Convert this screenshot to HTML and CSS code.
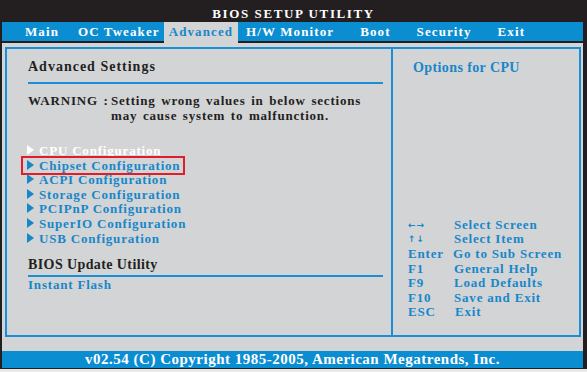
FILE: index.html
```html
<!DOCTYPE html>
<html lang="en">
<head>
    <meta charset="UTF-8">
    <title>BIOS SETUP UTILITY</title>
    <link rel="stylesheet" href="styles.css">
</head>
<body>
<div class="bios">
    <div class="title">BIOS SETUP UTILITY</div>
    <div class="tabs">
        <span class="tab tab-main">Main</span>
        <span class="tab tab-oc">OC Tweaker</span>
        <span class="tab active">Advanced</span>
        <span class="tab tab-hw">H/W Monitor</span>
        <span class="tab">Boot</span>
        <span class="tab">Security</span>
        <span class="tab">Exit</span>
    </div>
    <div class="body">
        <div class="frame">
            <div class="panel-left">
                <div class="section-title first">Advanced Settings</div>
                <div class="warning">
                    <span>WARNING :</span>
                    <span>Setting wrong values in below sections<br>may cause system to malfunction.</span>
                </div>
                <ul class="menu">
                    <li class="current">CPU Configuration</li>
                    <li class="marked">Chipset Configuration</li>
                    <li>ACPI Configuration</li>
                    <li>Storage Configuration</li>
                    <li>PCIPnP Configuration</li>
                    <li>SuperIO Configuration</li>
                    <li>USB Configuration</li>
                </ul>
                <div class="section-title second">BIOS Update Utility</div>
                <div class="flash">Instant Flash</div>
            </div>
            <div class="panel-right">
                <div class="help-title">Options for CPU</div>
                <div class="keys">
                    <span class="arrow">&larr;&rarr;</span><span>Select Screen</span>
                    <span class="arrow">&uarr;&darr;</span><span>Select Item</span>
                    <span>Enter</span><span class="shift">Go to Sub Screen</span>
                    <span>F1</span><span>General Help</span>
                    <span>F9</span><span>Load Defaults</span>
                    <span>F10</span><span>Save and Exit</span>
                    <span>ESC</span><span class="push">Exit</span>
                </div>
            </div>
        </div>
    </div>
    <div class="footer">v02.54 (C) Copyright 1985-2005, American Megatrends, Inc.</div>
</div>
</body>
</html>
```
FILE: styles.css
```css
* {
    margin: 0;
    padding: 0;
    box-sizing: border-box;
}

ul {
    list-style: none;
}

html {
    background: #e9e9e9;
}

body {
    font-family: "Liberation Serif", "Times New Roman", serif;
    font-weight: bold;
    font-size: 13px;
    letter-spacing: 0.8px;
    color: #231f20;
}

.bios {
    height: 369px;
    background: #231f20;
}

.title {
    height: 22px;
    padding-top: 6px;
    line-height: 16px;
    text-align: center;
    color: #fff;
    letter-spacing: 1.6px;
}

.tabs {
    display: flex;
    height: 21px;
    margin: 0 4px 0 2px;
    padding-left: 14px;
    background: #0b8dd2;
    border-bottom: 2px solid #231f20;
    letter-spacing: 1.1px;
}

.tab {
    padding: 0 13px;
    line-height: 19px;
    color: #fff;
}

.tab-main {
    padding: 0 9px;
}

.tab-oc {
    padding: 0 4px 0 10px;
}

.tab-hw {
    padding-left: 8px;
}

.tab.active {
    height: 21px;
    padding: 0 5px;
    background: #d3d4d6;
    color: #1787c9;
}

.body {
    margin: 0 4px 0 2px;
    padding: 4px 2px 14px 3px;
    background: #d3d4d6;
}

.frame {
    display: flex;
    height: 290px;
    border: 2px solid #1a8fd5;
}

.panel-left {
    width: 386px;
    padding: 10px 8px 0 21px;
    border-right: 2px solid #1a8fd5;
}

.section-title {
    font-size: 14px;
    line-height: 16px;
    border-bottom: 2px solid #1a8fd5;
}

.section-title.first {
    padding-bottom: 7px;
    letter-spacing: 1px;
}

.section-title.second {
    margin-top: 11px;
    padding-bottom: 2px;
    letter-spacing: 0.4px;
}

.warning {
    display: grid;
    grid-template-columns: 83px auto;
    margin-top: 10px;
    line-height: 14.5px;
    word-spacing: 1.6px;
}

.menu {
    margin: 21px 0 0 -1px;
    line-height: 14.6px;
    color: #1787c9;
}

.menu li {
    width: fit-content;
    position: relative;
}

.menu li::before {
    content: "";
    display: inline-block;
    width: 0;
    height: 0;
    margin-right: 5px;
    border-left: 7px solid currentColor;
    border-top: 5px solid transparent;
    border-bottom: 5px solid transparent;
}

.menu li.current {
    color: #fff;
}

.menu li.marked::after {
    content: "";
    position: absolute;
    top: -3px;
    bottom: -2px;
    left: -6px;
    right: -5px;
    border: 2px solid #e21d2b;
}

.flash {
    margin-top: 1px;
    line-height: 14.6px;
    color: #1787c9;
}

.panel-right {
    flex: 1;
    display: flex;
    flex-direction: column;
    padding: 11px 0 15px 15px;
    color: #1787c9;
}

.help-title {
    margin-left: 5px;
    font-size: 14px;
    line-height: 16px;
    letter-spacing: 0.4px;
}

.keys {
    margin-top: auto;
    display: grid;
    grid-template-columns: 46px auto;
    line-height: 14.6px;
}

.keys .arrow {
    font-family: "DejaVu Sans", sans-serif;
    font-size: 9px;
    letter-spacing: 1px;
}

.keys .shift {
    margin-left: -1px;
}

.keys .push {
    margin-left: 1px;
}

.footer {
    height: 18px;
    margin: 0 4px 0 2px;
    background: #0b8dd2;
    border-bottom: 1px solid #231f20;
    color: #fff;
    font-size: 15px;
    line-height: 17px;
    letter-spacing: 0.5px;
    text-align: center;
}
```
